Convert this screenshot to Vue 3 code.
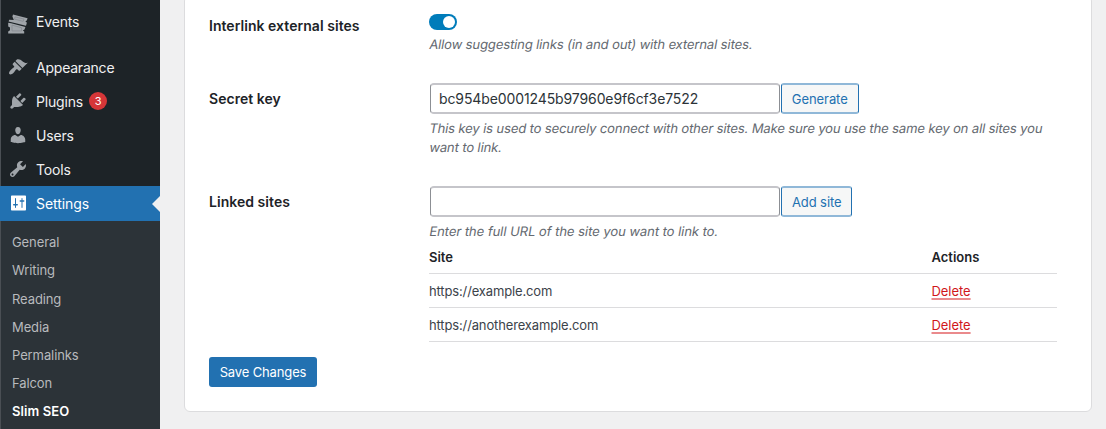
<script setup>
const menu = [
  { name: 'Appearance', icon: 'appearance', cls: 'm-app' },
  { name: 'Plugins', icon: 'plugins', badge: 3, cls: 'm-plug' },
  { name: 'Users', icon: 'users', cls: 'm-users' },
  { name: 'Tools', icon: 'tools', cls: 'm-tools' },
  { name: 'Settings', icon: 'settings', active: true, cls: 'm-set' },
]
const paths = {
  appearance: 'M14.48 11.06L7.41 3.99l1.5-1.5c.5-.56 2.3-.47 3.51.32 1.21.8 1.43 1.28 2.91 2.1 1.18.64 2.45 1.26 4.45.85zm-.71.71L6.7 4.7 4.93 6.47c-.39.39-.39 1.02 0 1.41l1.06 1.06c.39.39.39 1.03 0 1.42-.6.6-1.43 1.11-2.21 1.69-.35.26-.7.53-1.01.84C1.43 14.23.4 16.08 1.4 17.07c.99 1 2.84-.03 4.18-1.36.31-.31.58-.66.85-1.02.57-.78 1.08-1.61 1.69-2.21.39-.39 1.02-.39 1.41 0l1.06 1.06c.39.39 1.02.39 1.41 0z',
  plugins: 'M13.11 4.36L9.87 7.6 8 5.73l3.24-3.24c.35-.34 1.05-.2 1.56.32.52.51.66 1.21.31 1.55zm-8 1.77l.91-1.12 9.01 9.01-1.19.84c-.71.71-2.63 1.16-3.82 1.16H6.14L4.9 17.26c-.59.59-1.54.59-2.12 0-.59-.58-.59-1.53 0-2.12l1.24-1.24v-3.88c0-1.13.4-3.19 1.09-3.89zm7.26 3.97l3.24-3.24c.34-.35 1.04-.21 1.55.31.52.51.66 1.21.31 1.55l-3.24 3.25z',
  users: 'M10 9.25c-2.27 0-2.73-3.44-2.73-3.44C7 4.02 7.82 2 9.97 2c2.16 0 2.98 2.02 2.71 3.81 0 0-.41 3.44-2.68 3.44zm0 2.57L12.72 10c2.39 0 4.52 2.33 4.52 4.53v2.49s-3.65 1.13-7.24 1.13c-3.65 0-7.24-1.13-7.24-1.13v-2.49c0-2.25 1.94-4.48 4.47-4.48z',
  tools: 'M16.68 9.77c-1.34 1.34-3.3 1.67-4.95.99l-5.41 6.52c-.99.99-2.59.99-3.58 0s-.99-2.59 0-3.57l6.52-5.42c-.68-1.65-.35-3.61.99-4.95 1.28-1.28 3.12-1.62 4.72-1.06l-2.89 2.89 2.82 2.82 2.86-2.87c.53 1.58.18 3.39-1.08 4.65zM3.81 16.21c.4.39 1.04.39 1.43 0 .4-.4.4-1.04 0-1.43-.39-.4-1.03-.4-1.43 0-.39.39-.39 1.03 0 1.43z',
  settings: 'M18 16.5v-13c0-.55-.45-1-1-1H4c-.55 0-1 .45-1 1v13c0 .55.45 1 1 1h13c.55 0 1-.45 1-1zM8 11h1c.55 0 1 .4 1 .8s-.45.8-1 .8H8v1.9c0 .28-.22.5-.5.5s-.5-.22-.5-.5v-1.9H6c-.55 0-1-.4-1-.8s.45-.8 1-.8h1V5.5c0-.28.22-.5.5-.5s.5.22.5.5V11zm5.5-2.2h-1c-.55 0-1-.4-1-.8s.45-.8 1-.8h1V5.5c0-.28.22-.5.5-.5s.5.22.5.5v1.7h1c.55 0 1 .4 1 .8s-.45.8-1 .8h-1v5.7c0 .28-.22.5-.5.5s-.5-.22-.5-.5V8.8z',
}
const submenu = ['General', 'Writing', 'Reading', 'Media', 'Permalinks', 'Falcon', 'Slim SEO']
const sites = ['https://example.com', 'https://anotherexample.com']
</script>

<template>
  <div class="page">
    <nav class="sidebar">
      <a class="item events">
        <svg class="icon" viewBox="0 0 20 20">
          <path d="M5 2.6L19.6 6.2 18.8 8.4 17.4 9.2 18.9 10.8 18 13.8 .6 9.4 1.2 7.8 5.8 8 4.4 4.6z" />
          <path d="M.2 10.7L3.2 11.2 17.4 15 16.5 17.6 14.8 18.4 16.2 19.6V21.6H.2V19.6L2 18.2V15.6L.2 14.5z" />
          <path class="detail" d="M7 4.9L16 7.1 15.2 9.3 6.6 7.2zM4 13.1L13.6 15.8V18.9H4z" />
        </svg>
        <span class="label m-events">Events</span>
      </a>
      <a v-for="m in menu" :key="m.name" class="item" :class="{ active: m.active }">
        <svg class="icon" viewBox="0 0 20 20"><path fill-rule="evenodd" :d="paths[m.icon]" /></svg>
        <span class="label" :class="m.cls">{{ m.name }}</span>
        <span v-if="m.badge" class="badge">{{ m.badge }}</span>
      </a>
      <div class="submenu">
        <a v-for="s in submenu" :key="s" class="sub" :class="{ current: s === 'Slim SEO' }"><span>{{ s }}</span></a>
      </div>
    </nav>
    <main class="card">
      <section class="row interlink">
        <div class="heading h1">Interlink external sites</div>
        <div class="field">
          <div class="toggle"><i></i></div>
          <p class="desc d1"><span>Allow suggesting links (in and out) with external sites.</span></p>
        </div>
      </section>
      <section class="row secret">
        <div class="heading h2">Secret key</div>
        <div class="field">
          <div class="controls">
            <div class="input"><span>bc954be0001245b97960e9f6cf3e7522</span></div>
            <button class="btn generate">Generate</button>
          </div>
          <p class="desc d2"><span>This key is used to securely connect with other sites. Make sure you use the same key on all sites you</span><span>want to link.</span></p>
        </div>
      </section>
      <section class="row linked">
        <div class="heading h3">Linked sites</div>
        <div class="field">
          <div class="controls">
            <div class="input"></div>
            <button class="btn add">Add site</button>
          </div>
          <p class="desc d3"><span>Enter the full URL of the site you want to link to.</span></p>
          <div class="table">
            <div class="tr th"><span>Site</span><span>Actions</span></div>
            <div v-for="s in sites" :key="s" class="tr"><span class="url">{{ s }}</span><a class="delete">Delete</a></div>
          </div>
        </div>
      </section>
      <button class="save">Save Changes</button>
    </main>
  </div>
</template>

<style>
body { margin: 0; overflow: hidden; }
</style>

<style scoped>
* { box-sizing: border-box; }
.page {
  display: flex;
  width: 1106px;
  height: 429px;
  overflow: hidden;
  background: #f0f0f1;
  color: #1d2327;
  font: 13px/19px Inter, "Liberation Sans", sans-serif;
}
.sidebar {
  display: flex;
  flex-direction: column;
  width: 160px;
  height: 429px;
  background: #1d2327;
  border-left: 1px solid #4a4f54;
  flex: none;
}
.item {
  display: flex;
  align-items: center;
  position: relative;
  flex: none;
  height: 34.2px;
  padding-left: 7px;
  color: #f0f0f1;
  font-size: 14px;
  letter-spacing: -.17px;
}
.events { margin: 5px 0 10.4px; }
.icon { width: 20px; height: 20px; fill: #a0a5aa; overflow: visible; flex: none; }
.detail { fill: none; stroke: #858a90; stroke-width: .8; }
.label { margin-left: 8px; padding-top: 1px; white-space: nowrap; }
.m-events { padding-top: 0; padding-bottom: 1px; }
.m-app { letter-spacing: -.22px; }
.m-set { letter-spacing: -.05px; }
.active { background: #2271b1; color: #fff; margin-left: -1px; padding-left: 8px; }
.active .icon { fill: #fff; }
.active::after {
  content: "";
  position: absolute;
  right: 0;
  top: 9.5px;
  border: 8px solid transparent;
  border-left: 0;
  border-right-color: #f0f0f1;
}
.badge {
  width: 18px;
  height: 18px;
  margin: 1px 0 0 6px;
  border-radius: 9px;
  background: #d63638;
  color: #fff;
  font-size: 11px;
  line-height: 18px;
  text-align: center;
}
.submenu { flex: 1 0 auto; background: #2c3338; padding-top: 8.2px; }
.sub {
  display: flex;
  align-items: center;
  height: 28.2px;
  padding-left: 11px;
  color: #b8babd;
  letter-spacing: -.1px;
}
.current { color: #fff; font-weight: 600; letter-spacing: .08px; }
.card {
  width: 908px;
  height: 417px;
  margin: -5px 0 0 24px;
  padding: 5px 34px 0 24px;
  border: 1px solid #dcdcde;
  border-radius: 6px;
  background: #fff;
  flex: none;
}
.row { display: flex; }
.heading { width: 220px; flex: none; font-size: 14px; font-weight: 600; line-height: 20px; letter-spacing: .04px; white-space: nowrap; }
.field { width: 628px; }
.interlink { height: 83px; margin-top: -1px; }
.interlink .heading { padding-top: 16px; }
.toggle { width: 28px; height: 16px; margin-top: 14px; border-radius: 8px; background: #007cba; padding: 2px; display: flex; justify-content: flex-end; }
.toggle i { width: 12px; height: 12px; border-radius: 6px; background: #fff; }
.desc { margin: 0; color: #646970; white-space: nowrap; letter-spacing: -.11px; }
/* slanted upright letterforms instead of the family's cursive italics */
.desc span { display: block; width: max-content; transform: skewX(-10deg); transform-origin: 0 12px; }
.d1 { margin-top: 5px; }
.secret { height: 103px; }
.row .h2, .row .h3 { padding-top: 6px; }
.linked { height: 171px; }
.controls { display: flex; gap: 1px; padding-left: 1px; height: 31px; }
.input {
  width: 350px;
  height: 31px;
  padding-left: 8px;
  border: solid #8c8f94;
  border-width: 2px 1px;
  border-top-color: #c5c5ca;
  border-bottom-color: #c5c5ca;
  border-radius: 4px;
  font-size: 14px;
  line-height: 28px;
  letter-spacing: -.11px;
  color: #2c3338;
}
.btn {
  height: 31px;
  padding: 1px 0 0;
  border: solid #2271b1;
  border-width: 2px 1px;
  border-top-color: #90b8d8;
  border-bottom-color: #90b8d8;
  border-radius: 3px;
  background: #f6f7f7;
  color: #2271b1;
  font: 13px/26px Inter, sans-serif;
  letter-spacing: -.08px;
  white-space: nowrap;
}
.generate { width: 77.5px; }
.add { width: 71.4px; }
.d2 { margin-top: 5px; }
.d3 { margin-top: 5px; letter-spacing: -.04px; }
.tr { display: flex; height: 34px; padding-top: 8px; border-bottom: 1px solid #dcdcde; color: #3c434a; }
.tr > :first-child { width: 502.5px; }
.tr .url { letter-spacing: -.14px; }
.th { height: 33px; padding-top: 7px; color: #1d2327; font-weight: 600; }
.delete { color: #d0161b; letter-spacing: -.05px; text-decoration: underline 2px #ea8a8c; text-underline-offset: 2px; text-decoration-skip-ink: none; }
.save {
  display: block;
  width: 108px;
  height: 30px;
  padding: 0;
  border: 0;
  border-radius: 3px;
  background: #2271b1;
  color: #fff;
  font: 13px/30px Inter, sans-serif;
  letter-spacing: -.14px;
}
</style>
